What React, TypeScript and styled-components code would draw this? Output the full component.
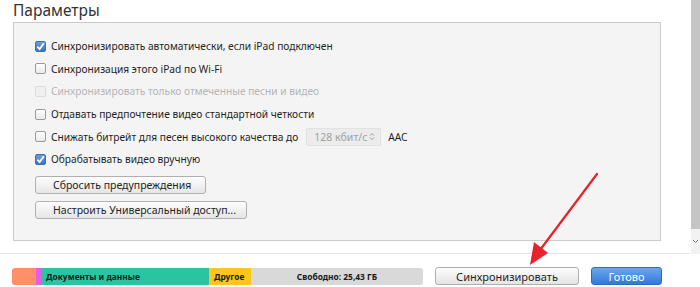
import React from 'react';
import styled, { createGlobalStyle } from 'styled-components';

const GlobalStyle = createGlobalStyle`
  html, body {
    margin: 0;
    padding: 0;
    background: #fff;
  }
  body {
    width: 700px;
    height: 287px;
    overflow: hidden;
    font-family: 'Noto Sans', 'Open Sans', Arial, sans-serif;
    color: #1f1f1f;
  }
`;

const Page = styled.div`
  position: relative;
  width: 700px;
  height: 287px;
  display: flex;
  flex-direction: column;
`;

const Main = styled.div`
  display: flex;
  height: 254px;
`;

const Content = styled.div`
  flex: 1;
  padding: 0 29px 0 13px;
  border-bottom: 1px solid #e4e4e4;
`;

const Title = styled.div`
  height: 22px;
  font-size: 15.5px;
  line-height: 21px;
  color: #333;
`;

const Panel = styled.div`
  box-sizing: border-box;
  height: 219px;
  background: #f4f4f4;
  border: 1px solid #cbcbcb;
  padding: 12px 0 0 21px;
`;

const Row = styled.label<{ $disabled?: boolean }>`
  display: flex;
  align-items: center;
  height: 22.6px;
  font-size: 10.2px;
  white-space: nowrap;
  color: ${(p) => (p.$disabled ? '#b4b4b4' : '#1f1f1f')};
`;

const Box = styled.span<{ $checked?: boolean; $disabled?: boolean }>`
  box-sizing: border-box;
  width: 11px;
  height: 11px;
  margin-right: 5px;
  border-radius: 2px;
  border: 1px solid ${(p) => (p.$disabled ? '#dcdcdc' : p.$checked ? '#3b70b3' : '#9a9a9a')};
  background: ${(p) =>
    p.$disabled ? '#f0f0f0' : p.$checked ? 'linear-gradient(#6d9fd8, #3a74c0)' : 'linear-gradient(#fff, #e9e9e9)'};
  display: flex;
  align-items: center;
  justify-content: center;
  flex-shrink: 0;
`;

const Select = styled.span`
  box-sizing: border-box;
  display: inline-flex;
  align-items: center;
  justify-content: space-between;
  width: 75px;
  height: 18px;
  margin-left: 8px;
  padding: 0 5px 0 7px;
  background: #ececec;
  border: 1px solid #e2e2e2;
  border-radius: 2px;
  color: #a0a0a0;
  font-size: 10.5px;
`;

const Suffix = styled.span`
  margin-left: 7px;
`;

const Buttons = styled.div`
  display: flex;
  flex-direction: column;
  align-items: flex-start;
  gap: 7px;
  margin-top: 5px;
`;

const Button = styled.button<{ $width: number }>`
  box-sizing: border-box;
  width: ${(p) => p.$width}px;
  height: 18px;
  padding: 0 0 0 17px;
  text-align: left;
  font-family: inherit;
  font-size: 10.5px;
  color: #1f1f1f;
  background: linear-gradient(#fdfdfd, #e6e6e6);
  border: 1px solid #b0b0b0;
  border-radius: 3px;
`;

const Scrollbar = styled.div`
  width: 9px;
  margin-left: 1px;
  display: flex;
  flex-direction: column;
  background: #f2f2f2;
`;

const Thumb = styled.div`
  height: 229px;
  background: #c5c5c5;
`;

const Chevron = styled.div`
  flex: 1;
  display: flex;
  align-items: center;
  justify-content: center;
`;

const Footer = styled.div`
  display: flex;
  align-items: center;
  gap: 12px;
  padding: 13px 0 0 12px;
`;

const Storage = styled.div`
  display: flex;
  width: 411px;
  height: 17px;
  border-radius: 3px;
  overflow: hidden;
  font-size: 8.4px;
  font-weight: 700;
  color: #1a1a1a;
`;

const Segment = styled.div<{ $color: string; $width?: number; $center?: boolean }>`
  display: flex;
  align-items: center;
  justify-content: ${(p) => (p.$center ? 'center' : 'flex-start')};
  padding-left: ${(p) => (p.$center ? 0 : 5)}px;
  box-sizing: border-box;
  background: ${(p) => p.$color};
  ${(p) => (p.$width ? `width: ${p.$width}px;` : 'flex: 1;')}
  white-space: nowrap;
`;

const SyncButton = styled.button`
  box-sizing: border-box;
  width: 144px;
  height: 18px;
  font-family: inherit;
  font-size: 11px;
  color: #1f1f1f;
  background: linear-gradient(#fdfdfd, #e4e4e4);
  border: 1px solid #aeaeae;
  border-radius: 3px;
`;

const DoneButton = styled.button`
  box-sizing: border-box;
  width: 71px;
  height: 18px;
  font-family: inherit;
  font-size: 11px;
  color: #fff;
  background: linear-gradient(#6aa8ee, #2f7ad8);
  border: 1px solid #2c6cc0;
  border-radius: 3px;
`;

const Arrow = styled.svg`
  position: absolute;
  left: 520px;
  top: 170px;
  pointer-events: none;
`;

const Check = () => (
  <svg width="9" height="9" viewBox="0 0 9 9">
    <path d="M1.3 4.6 L3.6 7 L7.8 1.2" fill="none" stroke="#fff" strokeWidth="1.8" />
  </svg>
);

type Item = { text: string; checked?: boolean; disabled?: boolean; bitrate?: boolean };

const items: Item[] = [
  { text: 'Синхронизировать автоматически, если iPad подключен', checked: true },
  { text: 'Синхронизация этого iPad по Wi-Fi' },
  { text: 'Синхронизировать только отмеченные песни и видео', disabled: true },
  { text: 'Отдавать предпочтение видео стандартной четкости' },
  { text: 'Снижать битрейт для песен высокого качества до', bitrate: true },
  { text: 'Обрабатывать видео вручную', checked: true },
];

const App = () => {
  return (
    <>
      <GlobalStyle />
      <Page>
        <Main>
          <Content>
            <Title>Параметры</Title>
            <Panel>
              {items.map((item) => (
                <Row key={item.text} $disabled={item.disabled}>
                  <Box $checked={item.checked} $disabled={item.disabled}>
                    {item.checked && <Check />}
                  </Box>
                  {item.text}
                  {item.bitrate && (
                    <>
                      <Select>
                        128 кбит/с
                        <svg width="6" height="9" viewBox="0 0 6 9">
                          <path d="M1 3.5 L3 1.5 L5 3.5 M1 5.5 L3 7.5 L5 5.5" fill="none" stroke="#999" strokeWidth="1" />
                        </svg>
                      </Select>
                      <Suffix>AAC</Suffix>
                    </>
                  )}
                </Row>
              ))}
              <Buttons>
                <Button $width={171}>Сбросить предупреждения</Button>
                <Button $width={212}>Настроить Универсальный доступ...</Button>
              </Buttons>
            </Panel>
          </Content>
          <Scrollbar>
            <Thumb />
            <Chevron>
              <svg width="7" height="5" viewBox="0 0 7 5">
                <path d="M1 1 L3.5 3.5 L6 1" fill="none" stroke="#777" strokeWidth="1" />
              </svg>
            </Chevron>
          </Scrollbar>
        </Main>
        <Footer>
          <Storage>
            <Segment $color="#ff8f6a" $width={24} />
            <Segment $color="#e85ae8" $width={3} />
            <Segment $color="#2bc4a0" $width={168}>Документы и данные</Segment>
            <Segment $color="#ffc51e" $width={42}>Другое</Segment>
            <Segment $color="#d9d9d9" $center>Свободно: 25,43 ГБ</Segment>
          </Storage>
          <SyncButton>Синхронизировать</SyncButton>
          <DoneButton>Готово</DoneButton>
        </Footer>
        <Arrow width="90" height="100" viewBox="0 0 90 100">
          <line x1="77" y1="4" x2="20" y2="80" stroke="#e8222a" strokeWidth="2.2" strokeLinecap="round" />
          <polygon points="10,95 14,72 28,83" fill="#e8222a" />
        </Arrow>
      </Page>
    </>
  );
};

export default App;
